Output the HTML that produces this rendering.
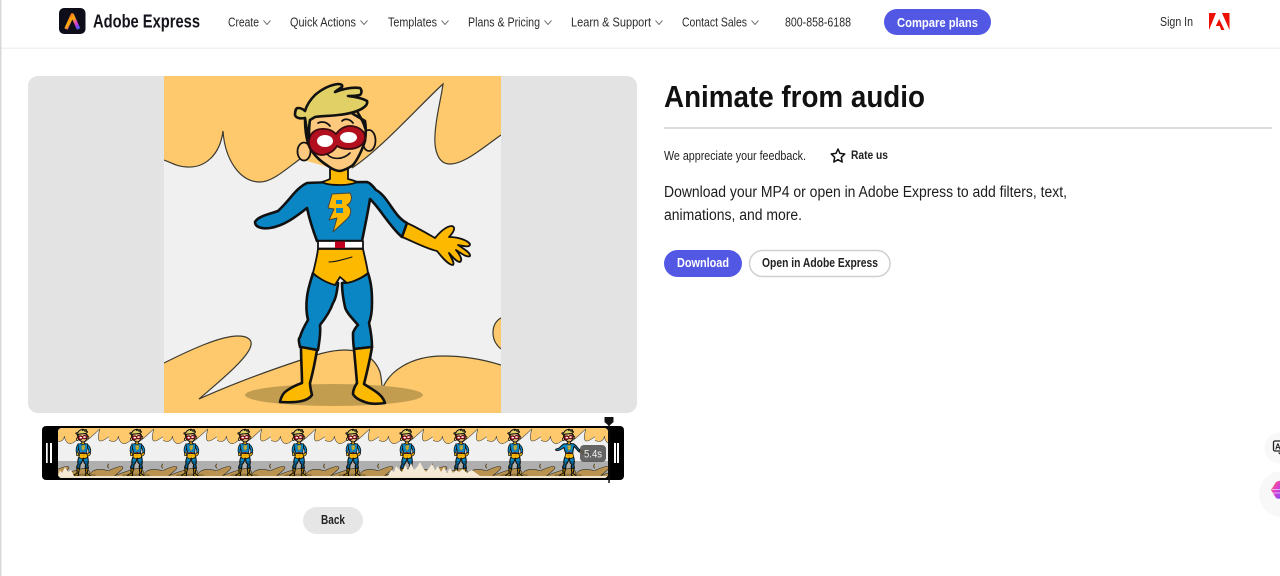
<!DOCTYPE html>
<html lang="en">
<head>
<meta charset="utf-8">
<title>Animate from audio</title>
<style>
html,body{margin:0;padding:0;width:1280px;height:576px;overflow:hidden;background:#fff}
svg{display:block;font-family:"Liberation Sans",sans-serif}
.a{stroke-width:calc(2.6px * var(--k,1))}
.b{stroke-width:calc(1.8px * var(--k,1))}
.w{stroke-width:calc(1.2px * var(--w,1))}
</style>
</head>
<body>
<svg width="1280" height="576" viewBox="0 0 1280 576" xmlns="http://www.w3.org/2000/svg">
<defs>
<clipPath id="imgc"><rect x="164" y="76" width="337" height="337"/></clipPath>
<clipPath id="cardc"><rect x="28" y="76" width="609" height="337" rx="10"/></clipPath>
<clipPath id="stripc"><rect x="58" y="428" width="550" height="50" rx="4"/></clipPath>
<linearGradient id="rb" x1="0" y1="0" x2="1" y2="1">
<stop offset="0" stop-color="#ff4b3a"/><stop offset=".4" stop-color="#ffb000"/><stop offset=".7" stop-color="#e03ad0"/><stop offset="1" stop-color="#3a5bff"/>
</linearGradient>
<linearGradient id="blob" x1="0" y1="0" x2="1" y2="1">
<stop offset="0" stop-color="#ff7a2a"/><stop offset=".45" stop-color="#e040c8"/><stop offset="1" stop-color="#7a4bff"/>
</linearGradient>
<g id="scene" clip-path="url(#imgc)">
<rect x="164" y="76" width="337" height="337" fill="#f0f0f0"/>
<path fill="#fec96d" d="M164 76H501V135C485 146 465 164 450 164C438 164 434 150 435 135C436 115 441 100 443 84C420 105 380 150 352 168L338 170L300 159C285 170 272 182 260 182C240 182 225 160 223 131C220 155 205 168 187 167C178 167 172 163 164 160Z"/>
<path class="w" fill="none" stroke="#3c3a30" d="M501 135C485 146 465 164 450 164C438 164 434 150 435 135C436 115 441 100 443 84C420 105 380 150 352 168M300 159C285 170 272 182 260 182C240 182 225 160 223 131C220 155 205 168 187 167C178 167 172 163 164 160"/>
<path fill="#fec96d" d="M164 363C190 350 220 336 238 336C248 336 252 340 251 345C249 358 215 385 199 399C230 385 265 372 298 361C315 355 330 350 345 350C362 350 375 358 380 372C382 380 382 385 382 390C388 372 410 356 443 356C465 356 485 360 501 365V413H164Z"/>
<path class="w" fill="none" stroke="#3c3a30" d="M164 363C190 350 220 336 238 336C248 336 252 340 251 345C249 358 215 385 199 399C230 385 265 372 298 361C315 355 330 350 345 350C362 350 375 358 380 372C382 380 382 385 382 390C388 372 410 356 443 356C465 356 485 360 501 365"/>
<path class="w" fill="#fec96d" stroke="#3c3a30" d="M503 317C496 320 493 326 493 333C493 340 497 347 503 350Z"/>
<ellipse cx="334" cy="395" rx="89" ry="11" fill="#c29d50"/>
</g>
<g id="core" stroke="#111" stroke-linejoin="round" stroke-linecap="round">
<path class="b" fill="#fdb900" d="M330 169L348 168V179C352 180 355 181 357 182C350 186 328 186 322 182C325 181 328 180 330 179Z"/>
<path fill="#fdb900" stroke="#444" stroke-width="1" d="M332 194L350 193C353 198 351 203 347 205C352 208 352 214 347 219L333 232L337 218L329 220L334 209L328 208Z"/>
<path fill="#0a86c4" d="M336 200h6v4h-6zM336 208h7v5h-7z" stroke="none"/>
<rect class="b" x="318" y="241" width="45" height="7.500" fill="#fff"/>
<rect x="335" y="241.500" width="10" height="7" fill="#c0001e" stroke="none"/>
<path class="a" fill="#0a86c4" d="M313 273C320 279 330 282 338 283C337 293 335 300 333 303C330 312 324 320 320 325C321 334 319 343 318 350L300 347C299 342 298 339 300 337C302 330 305 325 308 320C306 312 306 305 307 297C308 288 311 280 313 273Z"/>
<path class="a" fill="#0a86c4" d="M342 283C352 282 362 278 368 273C372 285 372 295 372 303C372 312 371 318 369 323C371 332 372 340 372 347L354 349C353 342 353 338 353 333C354 330 356 327 358 325C352 318 346 312 345 307C343 298 342 290 342 283Z"/>
<path class="b" fill="#fdb900" d="M318 249H363C365 258 367 266 368 273C362 278 353 282 347 283L340 277L335 285C327 283 318 278 313 273C315 265 317 257 318 249Z"/>
<path fill="none" stroke-width="1" d="M329 262C335 262 342 260 352 257"/>
<path class="a" fill="#fdb900" d="M301 347L317 350C315 362 313 372 310 383C310 387 311 391 312 395C308 401 298 403 280 402C281 397 283 394 285 392C290 388 296 385 302 383C302 372 301 360 301 347Z"/>
<path class="a" fill="#fdb900" d="M354 349L372 347C370 360 367 372 364 384C370 388 376 391 380 395C383 398 384 400 385 403C378 404 372 404 368 403C361 401 355 398 353 394C353 390 355 386 357 383C356 372 355 360 354 349Z"/>
<ellipse class="b" cx="304" cy="151.500" rx="6.500" ry="9" fill="#fdc97e"/>
<ellipse class="b" cx="369" cy="140.500" rx="6.500" ry="10.500" fill="#fdc97e"/>
<path class="a" fill="#fdc97e" d="M305 118C305 130 306 140 310 148C315 157 322 162 328 166C332 169 336 171 340 171C345 170 349 168 353 165C358 159 362 150 365 141C366 134 366 127 365 121L338 105Z"/>
<path fill="none" stroke-width="1.800" d="M318 123C322 121 327 122 330 126M342 121C345 118 350 119 353 123"/>
<path class="b" fill="#b3101f" stroke="#3a0a10" d="M309 142C309 133 316 128 325 129C330 129 334 132 336 134C339 130 344 126 350 126C358 126 365 131 365 137C365 145 357 149 349 149C344 149 340 148 337 146C334 151 328 155 321 155C314 154 309 149 309 142Z"/>
<ellipse cx="325" cy="141" rx="8" ry="6" fill="#fff" stroke="none"/>
<ellipse cx="348.500" cy="137.500" rx="8.500" ry="5.500" fill="#fff" stroke="none"/>
<path fill="none" stroke-width="1.600" d="M327 154C332 160 343 160 350 153"/>
<path class="a" fill="#e0d065" d="M309 138C307 132 306 124 305 118C300 119 296 118 295 115C295 111 296 108 298 108C301 108 303 109 305 111C307 104 311 99 315 95C322 89 330 85 338 84C341 84 343 85 342 87C339 89 337 90 335 92C343 89 352 87 360 88C362 90 362 93 360 95C356 96 352 96 348 96C355 97 362 98 367 101C368 104 366 106 363 108C357 112 348 114 338 115C330 116 322 116 315 117L310 120C309 125 309 132 309 138ZM358 113C361 118 364 123 365 128"/>
</g>
<g id="torsoBig" stroke="#111" stroke-linejoin="round" stroke-linecap="round">
<path class="b" fill="#fdb900" d="M407 223C418 228 428 234 435 238C440 232 446 226 452 226C456 227 454 232 449 237C458 237 467 240 470 244C470 248 464 246 458 245C464 249 471 253 470 256C467 258 461 253 456 250C460 255 463 260 460 262C456 262 452 256 449 253C451 258 455 263 453 265C448 265 441 256 437 251C427 249 412 241 402 237Z"/>
<path class="a" fill="#0a86c4" d="M307 183C296 188 290 200 278 211C270 214 258 216 255 222C255 228 264 229 270 228C284 226 297 216 307 208C310 222 314 233 317 241H362C365 226 368 212 370 199C379 207 390 227 402 237L407 223C394 217 388 196 376 190C373 186 370 183 367 182C350 182 325 182 307 183Z"/>
</g>
<g id="torsoThumb" stroke="#111" stroke-linejoin="round" stroke-linecap="round">
<path class="b" fill="#0a86c4" d="M310 184C297 196 292 225 298 243L310 246C306 228 310 214 314 205Z"/>
<path class="b" fill="#0a86c4" d="M364 184C380 194 392 222 386 240L374 246C378 228 372 214 366 205Z"/>
<path class="b" fill="#fdb900" d="M298 243L310 246L312 262L300 264ZM386 240L374 246L360 256L368 268C380 262 388 252 386 240Z"/>
<path class="b" fill="#0a86c4" d="M307 183C310 205 314 225 317 241H362C365 226 368 205 367 182C350 182 325 182 307 183Z"/>
</g>
<g id="heroBig"><use href="#torsoBig"/><use href="#core"/></g>
<g id="heroThumb"><use href="#torsoThumb"/><use href="#core"/></g>
</defs>

<rect width="1280" height="576" fill="#fff"/>
<rect x="0" y="0" width="1.500" height="576" fill="#d8d8d8"/>
<rect x="1.500" y="47.500" width="1278.500" height="1.500" fill="#f1f1f1"/>

<!-- Header -->
<rect x="59" y="8" width="26.500" height="26" rx="5" fill="#0e0e1a"/>
<path d="M66 29L72.300 15L78.600 29" fill="none" stroke="url(#rb)" stroke-width="3.600" stroke-linejoin="round"/>
<text x="93" y="27.500" font-size="18" font-weight="700" fill="#14141c" textLength="107" lengthAdjust="spacingAndGlyphs">Adobe Express</text>
<g font-size="13" fill="#2c2c2c">
<text x="228" y="26.500" textLength="31" lengthAdjust="spacingAndGlyphs">Create</text>
<text x="290" y="26.500" textLength="66" lengthAdjust="spacingAndGlyphs">Quick Actions</text>
<text x="388" y="26.500" textLength="49" lengthAdjust="spacingAndGlyphs">Templates</text>
<text x="468" y="26.500" textLength="72" lengthAdjust="spacingAndGlyphs">Plans &amp; Pricing</text>
<text x="571" y="26.500" textLength="80" lengthAdjust="spacingAndGlyphs">Learn &amp; Support</text>
<text x="682" y="26.500" textLength="65" lengthAdjust="spacingAndGlyphs">Contact Sales</text>
<text x="785" y="26.500" textLength="66" lengthAdjust="spacingAndGlyphs">800-858-6188</text>
<text x="1160" y="26" textLength="33" lengthAdjust="spacingAndGlyphs">Sign In</text>
</g>
<g fill="none" stroke="#555" stroke-width=".9">
<path d="M263.500 20.500L267 24.500L270.500 20.500"/>
<path d="M360.500 20.500L364 24.500L367.500 20.500"/>
<path d="M441.500 20.500L445 24.500L448.500 20.500"/>
<path d="M544.500 20.500L548 24.500L551.500 20.500"/>
<path d="M655.500 20.500L659 24.500L662.500 20.500"/>
<path d="M751.500 20.500L755 24.500L758.500 20.500"/>
</g>
<rect x="884" y="9" width="107" height="26" rx="13" fill="#5258e4"/>
<text x="897" y="27" font-size="13" font-weight="700" fill="#fff" textLength="81" lengthAdjust="spacingAndGlyphs">Compare plans</text>
<g fill="#eb1000">
<path d="M1209 13H1216L1209 30Z"/>
<path d="M1222 13H1229.500V30Z"/>
<path d="M1219.200 19L1224.500 30H1221.200L1219.700 26H1215.800Z"/>
</g>

<!-- Preview card -->
<rect x="28" y="76" width="609" height="337" rx="10" fill="#e3e3e3"/>
<g clip-path="url(#cardc)"><use href="#scene"/><use href="#heroBig"/></g>

<!-- Title and details -->
<text x="664" y="107" font-size="31" font-weight="700" fill="#111" textLength="261" lengthAdjust="spacingAndGlyphs">Animate from audio</text>
<rect x="664" y="127.500" width="608" height="1" fill="#b8b8b8"/>
<text x="664" y="160" font-size="12.500" fill="#222" textLength="142" lengthAdjust="spacingAndGlyphs">We appreciate your feedback.</text>
<path d="M838 149L840 153.400L844.800 154L841.300 157.300L842.200 162L838 159.700L833.800 162L834.700 157.300L831.200 154L836 153.400Z" fill="none" stroke="#111" stroke-width="1.500" stroke-linejoin="round"/>
<text x="851" y="159" font-size="12" font-weight="700" fill="#222" textLength="37" lengthAdjust="spacingAndGlyphs">Rate us</text>
<text x="664" y="197" font-size="15.500" fill="#1c1c1c" textLength="403" lengthAdjust="spacingAndGlyphs">Download your MP4 or open in Adobe Express to add filters, text,</text>
<text x="664" y="220" font-size="15.500" fill="#1c1c1c" textLength="138" lengthAdjust="spacingAndGlyphs">animations, and more.</text>
<rect x="664" y="250" width="78" height="27" rx="13.500" fill="#5258e4"/>
<text x="677" y="267" font-size="12.500" font-weight="700" fill="#fff" textLength="52" lengthAdjust="spacingAndGlyphs">Download</text>
<rect x="749.500" y="250.500" width="140.500" height="26" rx="13" fill="#fff" stroke="#d0d0d0" stroke-width="1.500"/>
<text x="762" y="267" font-size="12.500" font-weight="700" fill="#222" textLength="116" lengthAdjust="spacingAndGlyphs">Open in Adobe Express</text>

<!-- Timeline -->
<rect x="42" y="426" width="582" height="54" rx="4" fill="#000"/>
<g clip-path="url(#stripc)" style="--k:2.600;--w:3">
<rect x="58" y="428" width="550" height="50" fill="#f0f0f0"/>
<g transform="translate(55 428) scale(.16 .148) translate(-164 -76)"><use href="#scene"/><use href="#heroThumb"/></g>
<g transform="translate(109 428) scale(.16 .148) translate(-164 -76)"><use href="#scene"/><use href="#heroThumb"/></g>
<g transform="translate(163 428) scale(.16 .148) translate(-164 -76)"><use href="#scene"/><use href="#heroThumb"/></g>
<g transform="translate(217 428) scale(.16 .148) translate(-164 -76)"><use href="#scene"/><use href="#heroThumb"/></g>
<g transform="translate(271 428) scale(.16 .148) translate(-164 -76)"><use href="#scene"/><use href="#heroThumb"/></g>
<g transform="translate(325 428) scale(.16 .148) translate(-164 -76)"><use href="#scene"/><use href="#heroThumb"/></g>
<g transform="translate(379 428) scale(.16 .148) translate(-164 -76)"><use href="#scene"/><use href="#heroThumb"/></g>
<g transform="translate(433 428) scale(.16 .148) translate(-164 -76)"><use href="#scene"/><use href="#heroThumb"/></g>
<g transform="translate(487 428) scale(.16 .148) translate(-164 -76)"><use href="#scene"/><use href="#heroThumb"/></g>
<g transform="translate(541 428) scale(.16 .148) translate(-164 -76)"><use href="#scene"/><use href="#heroBig"/></g>
<g transform="translate(595 428) scale(.16 .148) translate(-164 -76)"><use href="#scene"/></g>
<rect x="58" y="461" width="550" height="15" fill="#000" opacity=".27"/>
<path d="M58 476L60 470L62 473L65 467L68 472L71 470L74 476ZM388 476L391 470L394 472L396 466L399 469L402 472L405 465L408 470L411 463L414 470L417 467L420 462L423 468L426 472L429 468L432 464L435 470L438 466L441 472L444 467L447 473L450 468L453 473L456 470L459 472L463 469L467 473L472 470L480 476Z" fill="#f4ead6"/>
<rect x="58" y="476" width="550" height="2" fill="#f2e6cf"/>
</g>
<rect x="46" y="443" width="1.700" height="20" fill="#fff"/>
<rect x="50" y="443" width="2" height="20" fill="#fff"/>
<rect x="614" y="443" width="2" height="20" fill="#fff"/>
<rect x="617" y="443" width="2" height="20" fill="#fff"/>
<rect x="580" y="445" width="26" height="17" rx="4" fill="#555" opacity=".9"/>
<text x="584" y="457.500" font-size="11" fill="#f2f2f2" textLength="18" lengthAdjust="spacingAndGlyphs">5.4s</text>
<rect x="608.300" y="420" width="1.500" height="63" fill="#111"/>
<path d="M604.500 417H613.500V422L609 426L604.500 422Z" fill="#111"/>

<!-- Back -->
<rect x="303" y="507" width="60" height="27" rx="13.500" fill="#e6e6e6"/>
<text x="321" y="524" font-size="12.500" font-weight="700" fill="#222" textLength="24" lengthAdjust="spacingAndGlyphs">Back</text>

<!-- Floating widgets -->
<circle cx="1280" cy="448" r="15.500" fill="#f8f8f8"/>
<rect x="1273.500" y="441" width="10" height="10" rx="1.500" fill="none" stroke="#222" stroke-width="1.300"/>
<text x="1275" y="449.500" font-size="8" font-weight="700" fill="#222">A</text>
<path d="M1278 452.500H1281L1279.500 454.500Z" fill="#222"/>
<circle cx="1282" cy="494" r="23" fill="#f8f8f8"/>
<path d="M1271 490L1276 482C1279 480.500 1281 480.500 1282 481V498C1280 499 1278 499 1276 498Z" fill="url(#blob)"/>
<path d="M1272 489.500H1282M1272 493H1282" stroke="#f6d6ff" stroke-width=".8"/>
</svg>
</body>
</html>
